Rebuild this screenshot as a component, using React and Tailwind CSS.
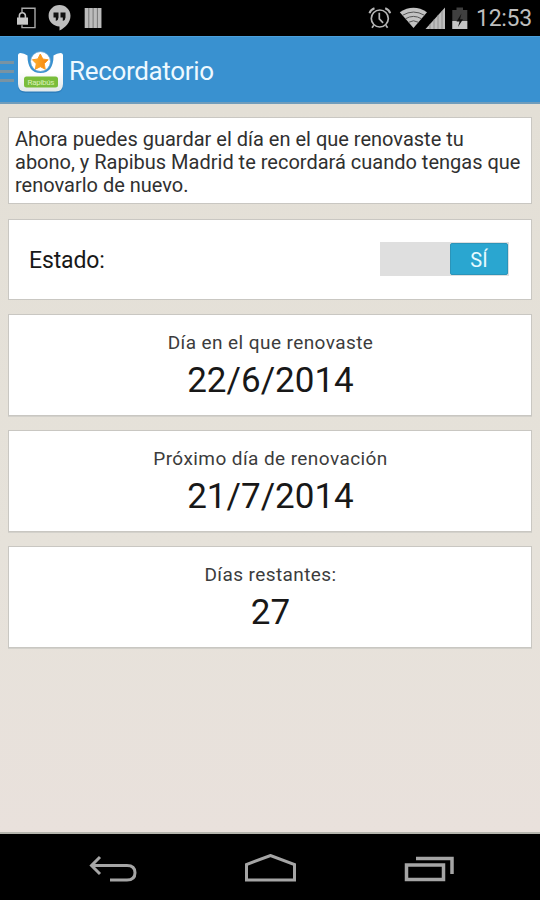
import React from "react";

const LockDevice = () => (
  <svg width="20" height="22" viewBox="16 7 20 22" fill="none">
    <path d="M22 12V8.2h13v19.4H22v-2.4" stroke="#a9a9a9" strokeWidth="1.4" />
    <path d="M19.4 18v-2.2a3 3 0 0 1 6 0V18" stroke="#c4c4c4" strokeWidth="1.6" />
    <rect x="17" y="17.5" width="11" height="7.2" fill="#c8c8c8" />
  </svg>
);

const Hangouts = () => (
  <svg width="24" height="28" viewBox="48 4 24 28">
    <path d="M59.5 5C53.4 5 48.6 9.8 48.6 15.8c0 6 4.8 10.6 10.9 10.6v4.2c5.500-2.600 11-8.200 11-14.800C70.500 9.800 65.600 5 59.500 5Z" fill="#bdbdbd" />
    <path d="M53.500 12.500h5v5q0 2.600-2.700 3.400v-3.400h-2.300ZM60.500 12.500h5v5q0 2.600-2.700 3.400v-3.400h-2.300Z" fill="#111" />
  </svg>
);

const Bars = () => (
  <svg width="18" height="22" viewBox="84 7 18 22">
    <path d="M84.500 8h17v20h-17z" fill="#777" />
    <path d="M85 8h3.300v20H85zM89.300 8h3.300v20h-3.300zM93.600 8h3.300v20h-3.300zM97.900 8h3.300v20h-3.300z" fill="#bcbcbc" />
  </svg>
);

const Alarm = () => (
  <svg width="24" height="24" viewBox="368 6 24 24" fill="none" stroke="#b5b5b5">
    <circle cx="379.800" cy="18.500" r="8.500" strokeWidth="1.700" />
    <path d="M379.300 12.800v6l3.800 4M373.800 25.300l-1.800 2.500M385.800 25.300l1.800 2.500" strokeWidth="1.700" />
    <path d="M369.500 13.200q1-3.500 5-5M390.200 13.200q-1-3.500-5-5" strokeWidth="2" />
  </svg>
);

const Wifi = () => (
  <svg width="28" height="22" viewBox="399 7 28 22">
    <path d="M399.800 12.200Q413.500 3.500 427 12.200L413.500 28Z" fill="#c2c2c2" />
    <path d="M402.500 15.300q11-6.500 22 0M405.400 18.800q8-4.800 16.200 0M408.500 22.300q5-3 10 0" fill="none" stroke="#555" strokeWidth="1" />
  </svg>
);

const Signal = () => (
  <svg width="20" height="23" viewBox="425 6 20 23">
    <path d="M425.500 28 445 6.500V28Z" fill="#bdbdbd" />
    <path d="M430 23v5M434 18.500V28M438 14v14M442 10v18" stroke="#858585" strokeWidth=".8" />
  </svg>
);

const Battery = () => (
  <svg width="16" height="23" viewBox="452 6 16 23">
    <path d="M456.500 6.500h6.500v2.500h4.300v19h-15V9h4.200Z" fill="#3f3f3f" />
    <path d="M452.300 20h15v8h-15z" fill="#c5c5c5" />
    <path d="m461.500 12.500-5 8h3l-1.500 5.500 5-7.800h-3Z" fill="#111" />
  </svg>
);

const AppLogo = () => (
  <svg width="48" height="46" viewBox="17 49 48 46">
    <defs>
      <linearGradient id="body" x1="0" y1="0" x2="0" y2="1">
        <stop offset="0.500" stopColor="#fff" />
        <stop offset="1" stopColor="#e1e7e8" />
      </linearGradient>
      <linearGradient id="star" x1="0" y1="0" x2="1" y2="0">
        <stop offset="0" stopColor="#ffb32d" />
        <stop offset="1" stopColor="#f5820e" />
      </linearGradient>
    </defs>
    <path d="M18 55.500q0-2.500 2.500-2.500 3.500 0 7 2.500 0 17.500 13 17.500t13-17.500q3.500-2.500 7-2.500 2.500 0 2.500 2.500v29q0 7.500-7.500 7.500H25.500q-7.500 0-7.500-7.500Z" fill="#2775b2" opacity=".65" transform="translate(0 1)" />
    <path d="M18 55.500q0-2.500 2.500-2.500 3.500 0 7 2.500 0 17.500 13 17.500t13-17.500q3.500-2.500 7-2.500 2.500 0 2.500 2.500v28.500q0 7.500-7.500 7.500H25.500q-7.500 0-7.500-7.500Z" fill="url(#body)" />
    <circle cx="40.500" cy="61.500" r="10" fill="#fff" stroke="#5c9fce" strokeWidth=".9" />
    <path d="m40.300 54 2.500 5 5.400.8-3.900 3.900.9 5.500-4.900-2.500-4.900 2.500.9-5.500-3.900-3.900 5.400-.8Z" fill="url(#star)" stroke="#fb9d25" strokeWidth="1" strokeLinejoin="round" />
    <rect x="24" y="76.500" width="34" height="11" rx="2.500" fill="#79bd3b" />
    <text x="41" y="84.700" textAnchor="middle" fill="#d9f0b8" fontSize="8" fontFamily="Roboto, sans-serif" textLength="27">Rapibús</text>
  </svg>
);

function DateCard({ label, value }) {
  return (
    <section className="flex h-[102px] flex-col items-center border border-[#c9c7c2] bg-white pl-px pt-[15px] text-center shadow-[0_1px_0_#d3d1cb]">
      <p className="text-[19px] leading-[26px] tracking-[0.420px] text-[#3c3c3c]">{label}</p>
      <p className="pt-px text-[35px] leading-[48px] text-[#181818]">{value}</p>
    </section>
  );
}

export default function App() {
  return (
    <div className="flex h-[900px] w-[540px] flex-col overflow-hidden bg-black font-[Roboto,sans-serif]">
      <header className="flex h-9 shrink-0 items-center bg-black pl-4 pr-[8px]">
        <LockDevice />
        <div className="ml-3"><Hangouts /></div>
        <div className="ml-3"><Bars /></div>
        <div className="ml-auto flex items-center">
          <Alarm />
          <div className="ml-[7px]"><Wifi /></div>
          <div className="-ml-[2px]"><Signal /></div>
          <div className="ml-[7px]"><Battery /></div>
          <span className="ml-[8px] w-[56px] whitespace-nowrap pt-[2px] text-[23px] leading-[34px] tracking-[-0.300px] text-[#bebebe]">12:53</span>
        </div>
      </header>

      <div className="flex h-[68px] shrink-0 items-center border-b-2 border-[#6f9cbb] border-t border-t-[#4ba0dc] bg-[#3991d0]">
        <div className="flex w-[14px] flex-col gap-[6px] pt-[3px]">
          <span className="h-[3px] bg-[#7893a3]" />
          <span className="h-[3px] bg-[#7893a3]" />
          <span className="h-[3px] bg-[#7893a3]" />
        </div>
        <div className="ml-[3px] pt-[4px]"><AppLogo /></div>
        <h1 className="ml-[4px] pt-[2px] text-[26px] leading-8 tracking-[-0.330px] text-[#eef9ff]">Recordatorio</h1>
      </div>

      <main className="flex grow flex-col gap-[14px] border-b-2 border-[#b5b5ad] bg-linear-to-b from-[#e3dfd6] from-0% via-[#e6e2da] via-60% to-[#e9e1dc] px-2 pt-[13px]">
        <section className="h-[87px] whitespace-nowrap border border-[#c9c7c2] bg-white pl-[6px] pt-[10px] text-[20px] leading-[23px] text-[#303030]">
          <p>Ahora puedes guardar el día en el que renovaste tu</p>
          <p>abono, y Rapibus Madrid te recordará cuando tengas que</p>
          <p>renovarlo de nuevo.</p>
        </section>

        <section className="mt-px flex h-[81px] items-center justify-between border border-[#c9c7c2] bg-white pl-5 pr-[22px]">
          <span className="pt-[2px] text-[23px] leading-8 tracking-[-0.150px] text-[#181818]">Estado:</span>
          <div className="mb-px flex h-[34px] w-[129px] justify-end bg-[#dfdfdf] p-px">
            <span className="flex w-[58px] items-center justify-center rounded-[2px] border border-[#2b94b9] bg-[#2aa6d0] pt-px text-[20px] text-[#e7faff]">SÍ</span>
          </div>
        </section>

        <DateCard label="Día en el que renovaste" value="22/6/2014" />
        <DateCard label="Próximo día de renovación" value="21/7/2014" />
        <DateCard label="Días restantes:" value="27" />
      </main>

      <nav className="flex h-[66px] shrink-0 items-center bg-black pl-[88px] pt-[3px]">
        <svg width="50" height="30" viewBox="88 854 50 30" fill="none" stroke="#a5a5a5" strokeWidth="3">
          <path d="M100 857 91.500 865.500 100 874M91.500 865.500H127q8 0 8 7.300t-8 7.300H110" />
        </svg>
        <svg className="ml-[105px]" width="54" height="30" viewBox="243 854 54 30" fill="none" stroke="#a5a5a5" strokeWidth="3">
          <path d="M246.500 880V864.500L270.500 855.500 294.500 864.500V880Z" />
        </svg>
        <svg className="ml-[105px]" width="54" height="30" viewBox="402 854 54 30" fill="none" stroke="#a5a5a5" strokeWidth="3.500">
          <path d="M406.500 865h37v14.500h-37ZM416 858.500h36v15.500" />
        </svg>
      </nav>
    </div>
  );
}
